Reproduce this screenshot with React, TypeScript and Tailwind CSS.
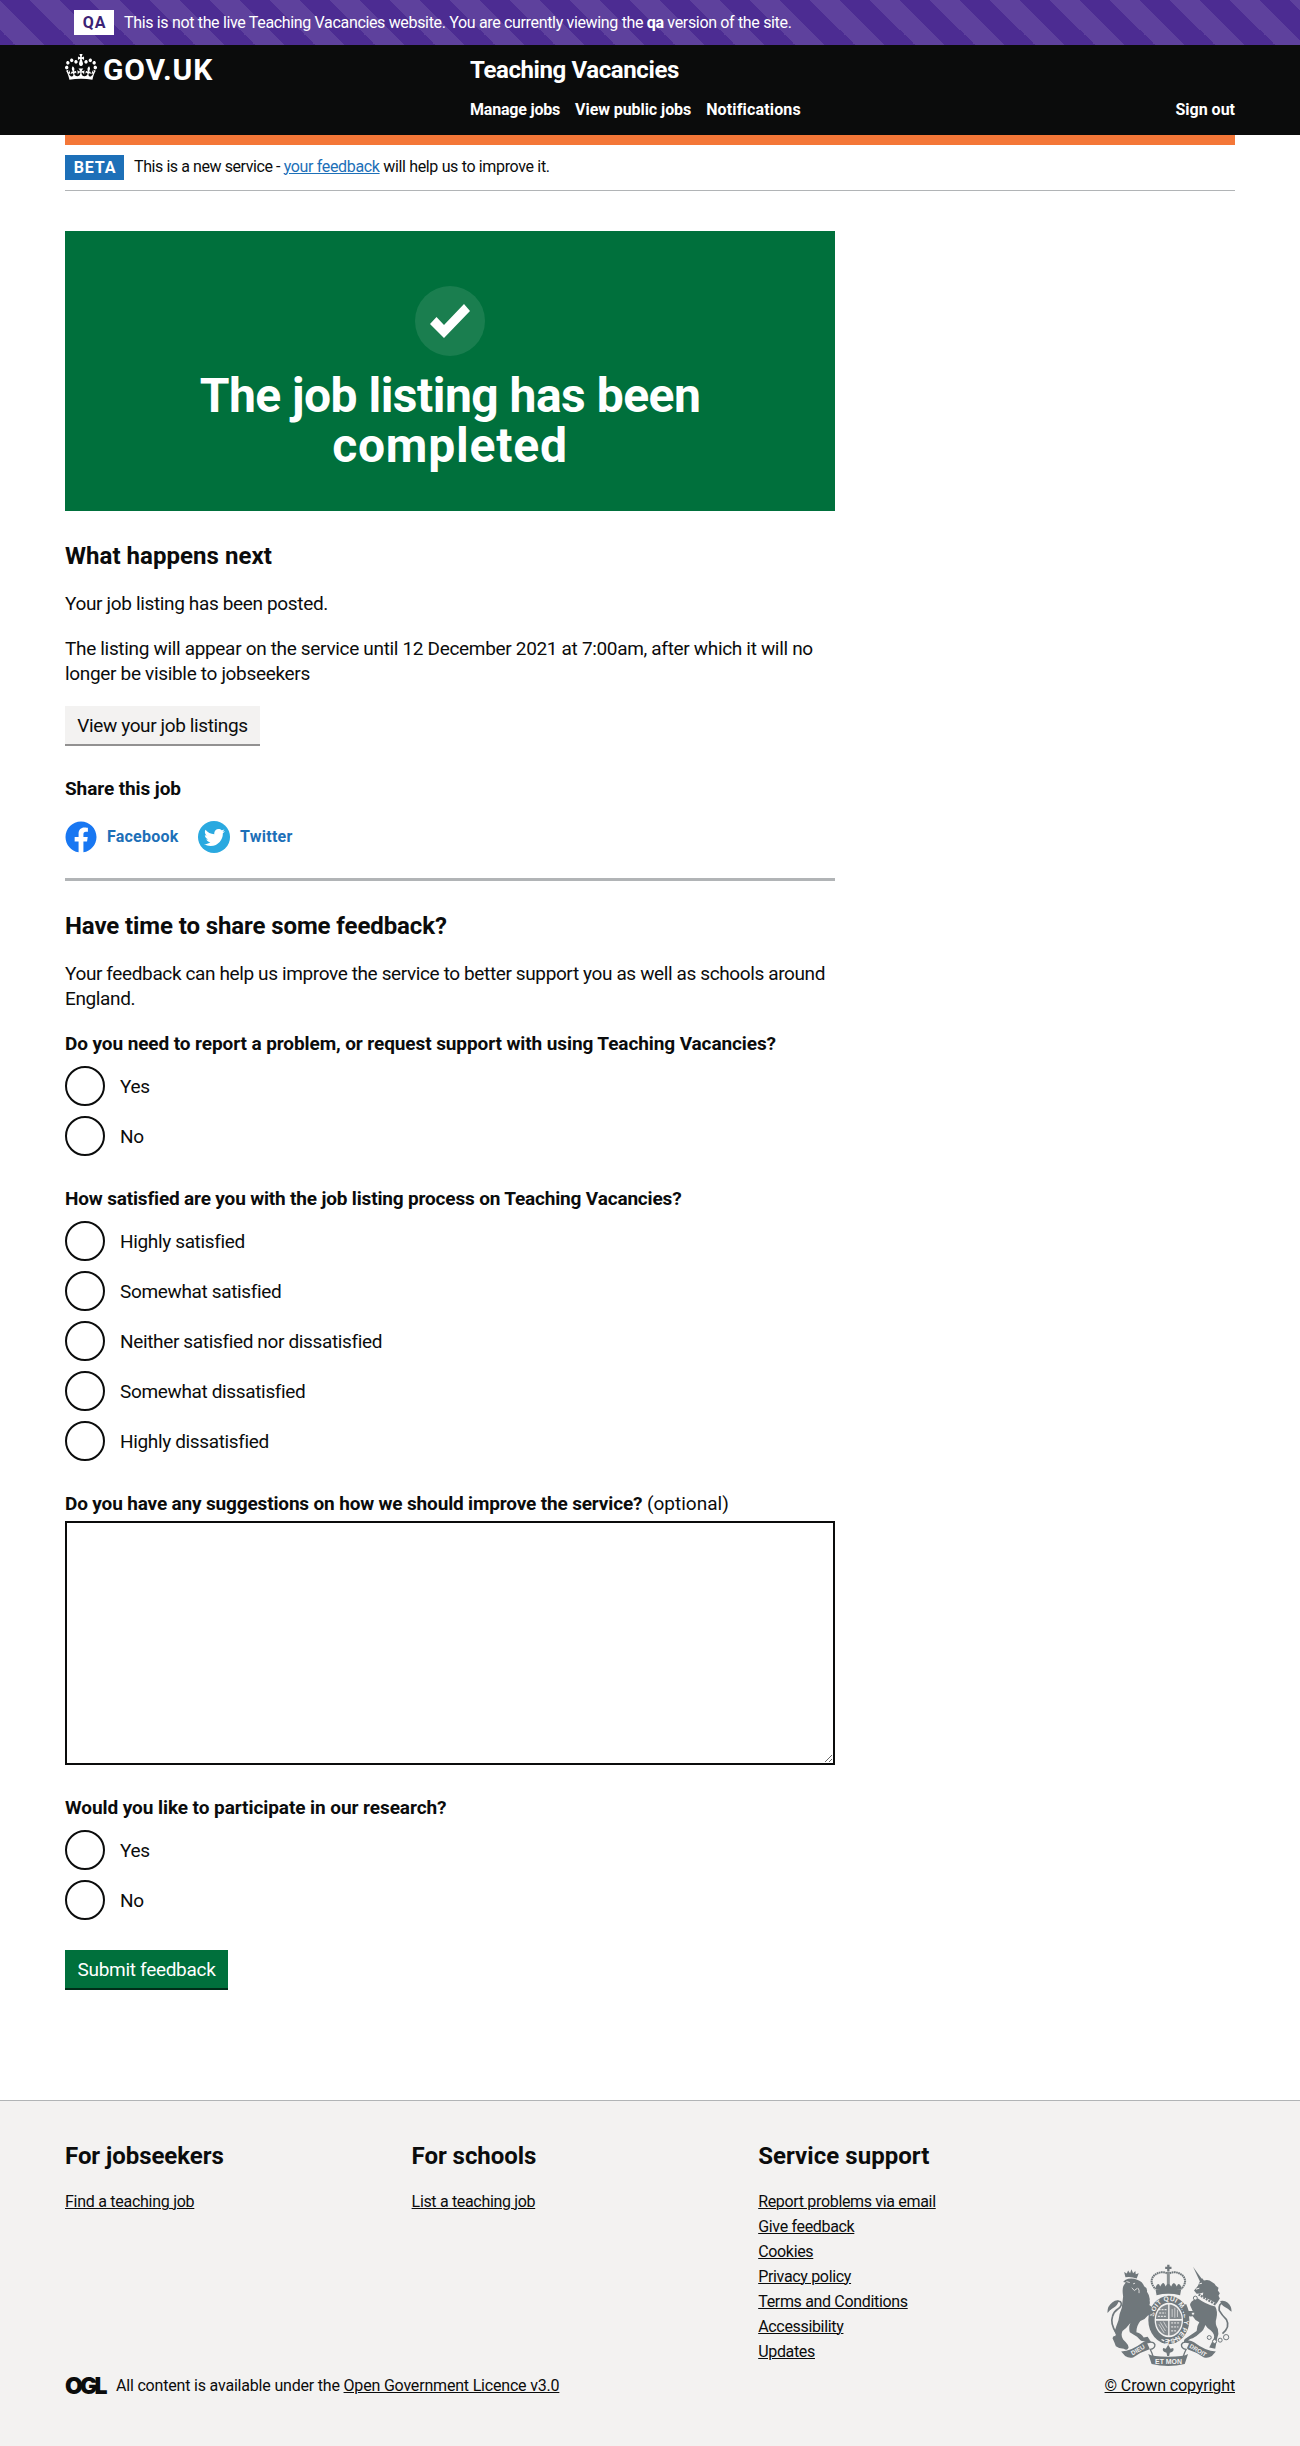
import type { ReactNode } from 'react';
import { FaFacebook, FaTwitter } from 'react-icons/fa';

function Crown() {
  return (
    <svg width="32" height="26" viewBox="0 0 132 97" preserveAspectRatio="none" fill="currentColor" aria-hidden="true">
      <path d="M25 30.2c3.5 1.5 7.7-.2 9.1-3.7 1.5-3.6-.2-7.8-3.9-9.2-3.6-1.4-7.6.3-9.1 3.9-1.4 3.5.3 7.5 3.9 9zM9 39.5c3.6 1.5 7.8-.2 9.2-3.7 1.5-3.6-.2-7.8-3.9-9.1-3.6-1.5-7.6.2-9.1 3.8-1.4 3.5.3 7.5 3.8 9zM4.4 57.2c3.5 1.5 7.7-.2 9.1-3.8 1.5-3.6-.2-7.7-3.9-9.1-3.5-1.5-7.6.3-9.1 3.8-1.4 3.5.3 7.6 3.9 9.1zm38.3-21.4c3.5 1.5 7.7-.2 9.1-3.8 1.5-3.6-.2-7.7-3.9-9.1-3.6-1.5-7.6.3-9.1 3.8-1.3 3.6.4 7.7 3.9 9.1zm64.4-5.6c-3.6 1.5-7.8-.2-9.1-3.7-1.5-3.6.2-7.8 3.8-9.2 3.6-1.4 7.7.3 9.2 3.9 1.3 3.5-.4 7.5-3.9 9zm15.9 9.3c-3.6 1.5-7.7-.2-9.1-3.7-1.5-3.6.2-7.8 3.7-9.1 3.6-1.5 7.7.2 9.2 3.8 1.5 3.5-.3 7.5-3.8 9zm4.7 17.7c-3.6 1.5-7.8-.2-9.2-3.8-1.5-3.6.2-7.7 3.9-9.1 3.6-1.5 7.7.3 9.2 3.8 1.3 3.5-.4 7.6-3.9 9.1zM89.3 35.8c-3.6 1.5-7.8-.2-9.2-3.8-1.4-3.6.2-7.7 3.9-9.1 3.6-1.5 7.7.3 9.2 3.8 1.4 3.6-.3 7.7-3.9 9.1zM69.7 17.7l8.9 4.7V9.3l-8.9 2.8c-.2-.3-.5-.6-.9-.9L72.4 0H59.6l3.5 11.2c-.3.3-.6.5-.9.9l-8.8-2.8v13.1l8.8-4.7c.3.3.6.7.9.9l-5 15.4v.1c-.2.8-.4 1.6-.4 2.4 0 4.1 3.1 7.5 7 8.1h.2c.3 0 .7.1 1 .1.4 0 .7 0 1-.1h.2c4-.6 7.1-4.1 7.1-8.1 0-.8-.1-1.7-.4-2.4V34l-5.1-15.4c.4-.2.7-.6 1-.9zM66 92.8c16.9 0 32.8 1.1 47.1 3.2 4-16.9 8.9-26.7 14-33.5l-9.6-3.4c1 4.9 1.1 7.2 0 10.2-1.5-1.4-3-4.3-4.2-8.7L108.6 76c2.8-2 5-3.2 7.5-3.3-4.4 9.4-10 11.9-13.6 11.2-4.3-.8-6.3-4.6-5.6-7.9 1-4.7 5.7-5.9 8-.5 4.3-8.7-3-11.4-7.6-8.8 7.1-7.2 7.9-13.5 2.1-21.1-8 6.1-8.1 12.3-4.5 20.8-4.7-5.4-12.1-2.5-9.5 6.2 3.4-5.2 7.9-2 7.2 3.1-.6 4.3-6.4 7.8-13.5 7.2-10.3-.9-10.9-8-11.2-13.8 2.5-.5 7.1 1.8 11 7.3L80.2 60c-4.1 4.4-8 5.3-12.3 5.4 1.4-4.4 8-11.6 8-11.6H55.5s6.4 7.2 7.9 11.6c-4.2-.1-8-1-12.3-5.4l1.4 16.4c3.9-5.5 8.5-7.7 10.9-7.3-.3 5.8-.9 12.8-11.1 13.8-7.2.6-12.9-2.9-13.5-7.2-.7-5 3.8-8.3 7.1-3.1 2.7-8.7-4.6-11.6-9.4-6.2 3.7-8.5 3.6-14.7-4.6-20.8-5.8 7.6-5 13.9 2.2 21.1-4.7-2.6-11.9.1-7.7 8.8 2.3-5.5 7.1-4.2 8.1.5.7 3.3-1.3 7.1-5.7 7.9-3.5.7-9-1.8-13.5-11.2 2.5.1 4.7 1.3 7.5 3.3l-4.7-15.4c-1.2 4.4-2.7 7.2-4.3 8.7-1.1-3-.9-5.3 0-10.2l-9.5 3.4c5 6.9 9.9 16.7 14 33.5 14.8-2.1 30.8-3.2 47.7-3.2z" />
    </svg>
  );
}

function RoyalArms() {
  return (
    <svg width="125" height="102" viewBox="50 40 376 308" fill="#6f777b" aria-hidden="true">
      {/* crown */}
      <path d="M231 42h7v6h6v7h-6v8h-7v-8h-6v-7h6z" />
      <path d="M230 68c-16-9-44 2-46 22-1 10 6 19 12 26M239 68c16-9 44 2 46 22 1 10-6 19-12 26" fill="none" stroke="#6f777b" strokeWidth="6" strokeDasharray="5 1.5" />
      <path d="M230 64h9v40h-9z" opacity=".8" />
      <path d="M196 110q8-18 14-2 10-22 16 0 8-16 17 0 8-22 17 0 6-16 14 2l-2 8h-74z" />
      <path d="M196 118q38-8 77 0l-3 16q-36-8-71 0z" />
      {/* garter and shield */}
      <ellipse cx="236" cy="209" rx="62" ry="73" />
      <path id="garter" d="M190 209a46 58 0 0 1 92 0a46 58 0 0 1-92 0" fill="none" />
      <text fontFamily="Liberation Sans" fontSize="20" fontWeight="700" fill="#f3f2f1" letterSpacing="1">
        <textPath href="#garter" startOffset="3%">SOIT QUI MAL Y PENSE</textPath>
      </text>
      <ellipse cx="236" cy="209" rx="43" ry="52" fill="#f3f2f1" />
      <ellipse cx="236" cy="209" rx="39" ry="47" opacity=".85" />
      <path d="M234 160h4v98h-4zM196 206h80v5h-80z" fill="#f3f2f1" />
      <path d="M205 178h24M207 188h20M203 198h26M243 218h26M243 230h22M243 242h16" stroke="#f3f2f1" strokeWidth="3" strokeDasharray="6 3" />
      <path d="M246 176v24M254 172v30M262 178v22M210 216l16 26M220 214l10 18M206 222l16 26" stroke="#f3f2f1" strokeWidth="2" />
      <path d="M214 268l8 4M232 270l8 2M250 270l8-3" stroke="#f3f2f1" strokeWidth="4" />
      {/* lion */}
      <path d="M105 80l-4-16 8 5 4-9 6 8 4-12 5 12 7-7 1 10 9-3-6 16q-17-7-34-4z" />
      <path d="M104 88q18-8 38 0 14 4 20 20 10 4 8 16 10 14 8 26 2 10-1 14l8 6-3 10 8 8-18 8q-8 12-22 16-12 14-12 34 16 4 22 16l12-2 8 12-16 2-12-2-12-12-22-14q-4-16 2-28-12 16-24 24-6 14 2 26l8 8q10 10 8 18-4 8-14 2l-14-2-10-6-4-10-6-14q2-8 8-6l2-6-4-8q8-24 12-34 2-20 10-38 2-18 4-34-4-24 2-34l6-8-8-2z" />
      <path d="M108 93l10 3M128 100l6-2M124 112l8 8 8-6M142 112q6 6 4 16" stroke="#f3f2f1" strokeWidth="2.5" fill="none" />
      <path d="M78 250q-20-30-12-52 4-14 16-22 16-12 8-22-6-4-14 2-10 8-18 22" fill="none" stroke="#6f777b" strokeWidth="5" />
      <path d="M51 188q-2-20 14-32 10-8 20-6-4 16-16 22-10 4-18 16z" />
      {/* unicorn */}
      <path d="M309 48l30 42-8 5z" />
      <path d="M328 96l8-14 6 8q14-4 24 4 10 4 12 12l8 6-2 8 6 8-4 8 4 8-10 16q-20-14-42-22l2-12q-10 4-20 4l-8-10 12-14z" />
      <path d="M326 132q24 14 54 32" fill="none" stroke="#6f777b" strokeWidth="7" strokeDasharray="6 3" />
      <path d="M324 144q24 18 52 24 8 14 4 34-6 18 4 34 4 14-2 28l-6 32-18-4 14-28q4-12-10-24-10-6-16-16-4 16-16 24-10 10-22 16-12 2-16 12l-10 2q-2-10 6-14l32-22q0-14 8-26-14-6-20-18-14 2-22-4l-4-10-6-4 4-12 8-8 4 10 4 12 12 0-8-18q0-12 20-20z" />
      <path d="M328 100l8-2M318 116l10-3" stroke="#f3f2f1" strokeWidth="3" />
      <path d="M398 250q24-20 12-42-14-14-22-28-2-22 12-22 12 6 22 20" fill="none" stroke="#6f777b" strokeWidth="5" />
      <path d="M425 184q2-16-12-28-10-8-22-4 4 14 14 18 12 6 20 14z" />
      <g fill="#f3f2f1" stroke="#6f777b" strokeWidth="3">
        <circle cx="316" cy="143" r="6" />
        <circle cx="309" cy="190" r="5" />
        <circle cx="358" cy="262" r="6" />
        <circle cx="374" cy="274" r="6" />
        <circle cx="391" cy="270" r="6" />
        <circle cx="409" cy="261" r="8" />
      </g>
      {/* motto ribbon */}
      <path d="M92 304q32-2 66-28 12-8 22-4l8 12-12 14q-26 8-48 24-12 4-24-4zM378 304q-32-2-66-28-12-8-22-4l-8 12 12 14q26 8 48 24 12 4 24-4z" />
      <path d="M170 278q20-6 24 6 0 12-14 14 6 12 8 20M298 278q-20-6-24 6 0 12 14 14-6 12-8 20" fill="#f3f2f1" stroke="#6f777b" strokeWidth="4" />
      <path d="M174 312q12 8 60 8t60-8l-10 30q-50 12-100 0z" />
      <path d="M234 284l7 12 8-2q4 8-4 12l-6 2-2 10h-6l-2-10-6-2q-8-4-4-12l8 2z" />
      <g fontFamily="Liberation Sans" fontWeight="700" fill="#f3f2f1" textAnchor="middle">
        <text x="235" y="342" fontSize="21">ET MON</text>
        <text transform="translate(146 305) rotate(-31)" fontSize="19">DIEU</text>
        <text transform="translate(321 306) rotate(31)" fontSize="18">DROIT</text>
      </g>
    </svg>
  );
}

function Radios({ options }: { options: string[] }) {
  return (
    <div className="mt-2.5 flex flex-col gap-2.5">
      {options.map((o) => (
        <label key={o} className="flex h-10 items-center">
          <span className="size-10 shrink-0 rounded-full border-2 border-[#0b0c0c]" />
          <span className="ml-[15px] pt-px text-[19px] leading-[25px] tracking-[-0.35px]">{o}</span>
        </label>
      ))}
    </div>
  );
}

function FooterLink({ children, track = 'tracking-[-0.33px]' }: { children: ReactNode; track?: string }) {
  return (
    <a href="#" className={`underline decoration-1 underline-offset-1 ${track}`}>
      {children}
    </a>
  );
}

const support = ['Report problems via email', 'Give feedback', 'Cookies', 'Privacy policy', 'Terms and Conditions', 'Accessibility', 'Updates'];

export default function App() {
  return (
    <div className="min-h-[2446px] bg-white font-['Roboto',sans-serif] text-[19px] leading-[25px] text-[#0b0c0c]">
      <div className="h-[45px] bg-[#4c2c92] bg-[linear-gradient(45deg,transparent_25%,#5e419d_25%,#5e419d_50%,transparent_50%,transparent_75%,#5e419d_75%)] bg-[length:60px_60px]">
        <div className="flex items-center pl-[74px] pt-2.5 text-[16px] leading-5 text-white">
          <strong className="mr-[10px] flex h-[25px] w-10 items-center justify-center bg-white pl-px tracking-[0.8px] text-[#3b2274]">QA</strong>
          <span className="whitespace-nowrap tracking-[-0.335px]">
            This is not the live Teaching Vacancies website. You are currently viewing the <b>qa</b> version of the site.
          </span>
        </div>
      </div>

      <header className="h-[90px] bg-[#0b0c0c] text-white">
        <div className="mx-[65px] flex">
          <div className="flex w-[405px] items-start pt-[9px]">
            <Crown />
            <span className="ml-[6px] mt-[-2px] text-[30px] font-bold leading-[36px] tracking-[0.9px]">GOV.UK</span>
          </div>
          <div className="flex-1 pt-2.5">
            <div className="text-[24px] font-bold leading-[30px] tracking-[-0.39px]">Teaching Vacancies</div>
            <nav className="mt-[15px] flex text-[16px] font-bold leading-5">
              <a href="#" className="mr-[15px] tracking-[-0.2px]">Manage jobs</a>
              <a href="#" className="mr-[15px] tracking-[-0.07px]">View public jobs</a>
              <a href="#" className="tracking-[0.15px]">Notifications</a>
              <a href="#" className="ml-auto">Sign out</a>
            </nav>
          </div>
        </div>
      </header>

      <div className="mx-[65px] h-2.5 bg-[#f47738]" />

      <div className="mx-[65px] flex h-[46px] items-start border-b border-[#b1b4b6] pt-2.5 text-[16px] leading-5">
        <strong className="mr-2.5 flex h-[25px] w-[59px] items-center justify-center bg-[#1d70b8] pl-px tracking-[0.8px] text-white">BETA</strong>
        <span className="mt-[2px] whitespace-nowrap tracking-[-0.34px]">
          <span className="tracking-[-0.42px]">This is a new service - </span>
          <a href="#" className="text-[#1d70b8] underline decoration-1 underline-offset-1">your feedback</a> will help us to improve it.
        </span>
      </div>

      <main className="ml-[65px] mt-10 w-[770px]">
        <div className="flex h-[280px] flex-col items-center bg-[#00703c] pt-[55px] text-center text-white">
          <svg width="70" height="70" viewBox="0 0 70 70" aria-hidden="true">
            <circle cx="35" cy="35" r="35" fill="#fff" fillOpacity=".1" />
            <path d="M15 38l6.5-7 7.5 8 20-21 6 7-26 27z" fill="#fff" />
          </svg>
          <h1 className="mt-[15px] text-[48px] font-bold leading-[50px]">
            <span className="block tracking-[-0.52px]">The job listing has been</span>
            <span className="block tracking-[0.8px]">completed</span>
          </h1>
        </div>

        <h2 className="mt-[30px] text-[24px] font-bold leading-[30px] tracking-[0.05px]">What happens next</h2>
        <p className="mt-5 tracking-[-0.35px]">Your job listing has been posted.</p>
        <p className="mt-5 whitespace-nowrap tracking-[-0.325px]">
          The listing will appear on the service until 12 December 2021 at 7:00am, after which it will no
          <br />
          longer be visible to jobseekers
        </p>
        <a href="#" className="mt-5 flex h-10 w-[195px] items-center justify-center border-b-2 border-[#929191] bg-[#f3f2f1] tracking-[-0.38px]">
          View your job listings
        </a>

        <h3 className="mt-[30px] font-bold tracking-[-0.09px]">Share this job</h3>
        <div className="mt-5 flex h-8 items-center text-[16px] font-bold leading-5 text-[#1d70b8]">
          <FaFacebook className="size-8 text-[#1877f2]" />
          <a href="#" className="ml-2.5 w-[91px] tracking-[0.22px]">Facebook</a>
          <span className="flex size-8 items-center justify-center rounded-full bg-[#2aa9e0] text-white">
            <FaTwitter className="size-[21px]" />
          </span>
          <a href="#" className="ml-2.5 tracking-[0.25px]">Twitter</a>
        </div>

        <hr className="mt-[25px] h-[3px] border-0 bg-[#b1b4b6]" />

        <h2 className="mt-[30px] text-[24px] font-bold leading-[30px] tracking-[-0.1px]">Have time to share some feedback?</h2>
        <p className="mt-5 whitespace-nowrap tracking-[-0.38px]">
          Your feedback can help us improve the service to better support you as well as schools around
          <br />
          England.
        </p>

        <h3 className="mt-5 font-bold tracking-[-0.095px]">Do you need to report a problem, or request support with using Teaching Vacancies?</h3>
        <Radios options={['Yes', 'No']} />

        <h3 className="mt-[30px] font-bold tracking-[-0.17px]">How satisfied are you with the job listing process on Teaching Vacancies?</h3>
        <Radios options={['Highly satisfied', 'Somewhat satisfied', 'Neither satisfied nor dissatisfied', 'Somewhat dissatisfied', 'Highly dissatisfied']} />

        <div className="mt-[30px]">
          <b className="tracking-[-0.16px]">Do you have any suggestions on how we should improve the service?</b>{' '}
          <span>(optional)</span>
        </div>
        <textarea className="mt-[5px] block h-[244px] w-full resize-y border-2 border-[#0b0c0c] bg-white p-[5px]" />

        <h3 className="mt-[30px] font-bold tracking-[-0.07px]">Would you like to participate in our research?</h3>
        <Radios options={['Yes', 'No']} />

        <button className="mt-[30px] flex h-10 w-[163px] items-center justify-center border-b-2 border-[#002d18] bg-[#00703c] tracking-[-0.3px] text-white">
          Submit feedback
        </button>
      </main>

      <footer className="mt-[110px] flex h-[346px] flex-col border-t border-[#b1b4b6] bg-[#f3f2f1] px-[65px] pt-10 text-[16px] leading-5">
        <div className="flex h-[209px]">
          <div className="w-[346.6px]">
            <h2 className="text-[24px] font-bold leading-[30px] tracking-[-0.05px]">For jobseekers</h2>
            <div className="mt-[21px]"><FooterLink track="tracking-[-0.27px]">Find a teaching job</FooterLink></div>
          </div>
          <div className="w-[346.6px]">
            <h2 className="text-[24px] font-bold leading-[30px] tracking-[-0.05px]">For schools</h2>
            <div className="mt-[21px]"><FooterLink>List a teaching job</FooterLink></div>
          </div>
          <div>
            <h2 className="text-[24px] font-bold leading-[30px] tracking-[0.05px]">Service support</h2>
            <ul className="mt-[21px] flex flex-col gap-[5px]">
              {support.map((s) => (
                <li key={s}><FooterLink>{s}</FooterLink></li>
              ))}
            </ul>
          </div>
        </div>
        <div className="mt-[-86px] flex items-end justify-between">
          <div className="flex items-end">
            <span className="w-[51px] font-['Inter',sans-serif] text-[23px] font-black leading-5 tracking-[-2.8px]">OGL</span>
            <span className="whitespace-nowrap tracking-[-0.19px]">
              All content is available under the <FooterLink track="tracking-[-0.19px]">Open Government Licence v3.0</FooterLink>
            </span>
          </div>
          <div className="flex flex-col items-center gap-2.5">
            <RoyalArms />
            <FooterLink track="tracking-[-0.12px]">© Crown copyright</FooterLink>
          </div>
        </div>
      </footer>
    </div>
  );
}
